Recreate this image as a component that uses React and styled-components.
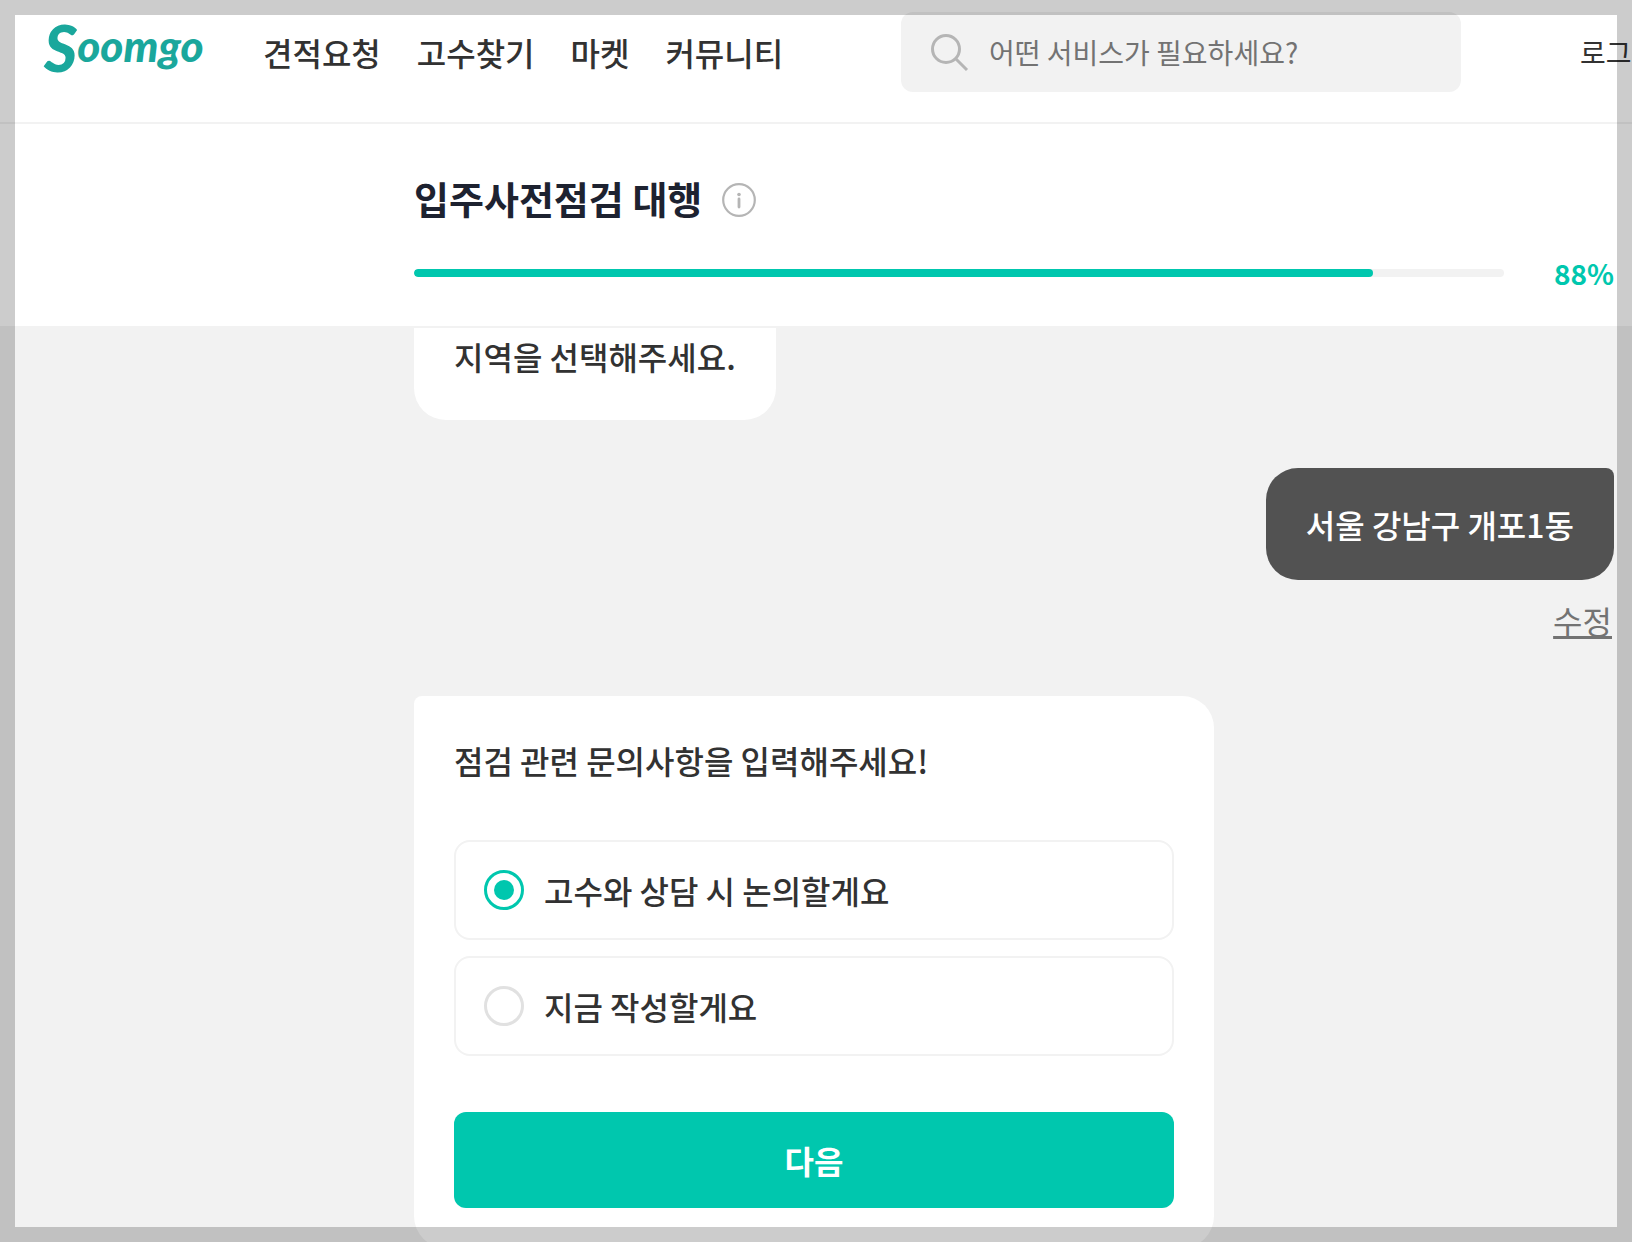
import React, { useState } from 'react'
import styled, { createGlobalStyle } from 'styled-components';

const GlobalStyle = createGlobalStyle`
    * {
        box-sizing: border-box;
    }

    body {
        margin: 0;
        background: #f2f2f2;
        color: #323232;
        font-family: "Noto Sans CJK KR", "Noto Sans", sans-serif;
        font-size: 32px;
        line-height: 48px;
    }

    button, input {
        font-family: inherit;
    }
`;

const Page = styled.div`
    height: 100vh;
    display: flex;
    flex-direction: column;
    overflow: hidden;
`;

const Frame = styled.div`
    position: fixed;
    inset: 0;
    z-index: 100;
    border: 15px solid rgba(0, 0, 0, 0.2);
    pointer-events: none;
`;

const Header = styled.header`
    display: flex;
    align-items: center;
    flex-shrink: 0;
    padding: 12px 0 30px 44px;
    background: #fff;
    border-bottom: 2px solid #f2f2f2;
`;

const Logo = styled.a`
    flex-shrink: 0;
    width: 160px;
    padding-bottom: 14px;
    color: #1aa79c;
    font-family: Lato, sans-serif;
    font-size: 44px;
    font-style: italic;
    font-weight: 900;
    text-decoration: none;
    white-space: nowrap;
`;

const LogoInitial = styled.span`
    font-size: 64px;
    line-height: 0;
    vertical-align: -10px;
`;

const Nav = styled.nav`
    display: flex;
    gap: 36px;
    margin-left: 59px;
`;

const NavLink = styled.a`
    color: inherit;
    font-weight: 500;
    text-decoration: none;
    white-space: nowrap;
`;

const Search = styled.label`
    display: flex;
    align-items: center;
    gap: 20px;
    flex: 0 1 560px;
    height: 80px;
    margin-left: auto;
    padding: 0 28px;
    background: #f2f2f2;
    border-radius: 12px;
`;

const SearchIcon = styled.svg`
    flex: none;
    width: 40px;
    height: 40px;
`;

const SearchInput = styled.input`
    flex: 1;
    min-width: 0;
    padding: 0;
    border: 0;
    outline: 0;
    background: transparent;
    font-size: 28px;

    &::placeholder {
        color: #737373;
        opacity: 1;
    }
`;

const Login = styled.a`
    flex: 0 0 52px;
    margin-left: 119px;
    color: inherit;
    font-size: 28px;
    text-decoration: none;
    white-space: nowrap;
    overflow: hidden;
`;

const ProgressSection = styled.section`
    flex-shrink: 0;
    padding: 48px 18px 28px;
    background: #fff;
    border-bottom: 2px solid #f2f2f2;
`;

const Container = styled.div`
    max-width: 1200px;
    margin-left: auto;
`;

const TitleRow = styled.div`
    display: flex;
    align-items: center;
    gap: 20px;
    height: 56px;
`;

const Title = styled.h1`
    margin: 0;
    padding-bottom: 4px;
    color: #1d2230;
    font-size: 38px;
    font-weight: 700;
`;

const InfoButton = styled.button`
    display: flex;
    padding: 0;
    border: 0;
    background: none;
    cursor: pointer;
`;

const ProgressRow = styled.div`
    display: flex;
    align-items: center;
    height: 50px;
    margin-top: 20px;
`;

const Track = styled.div`
    flex: 1;
    height: 8px;
    background: #f2f2f2;
    border-radius: 4px;
    overflow: hidden;
`;

const Fill = styled.div`
    height: 100%;
    background: #00c7ae;
    border-radius: 4px;
`;

const Percent = styled.span`
    width: 110px;
    color: #00c7ae;
    font-size: 28px;
    font-weight: 700;
    text-align: right;
`;

const Chat = styled.main`
    flex: 1;
    min-height: 0;
    padding: 0 18px;
    overflow-y: auto;
    scrollbar-width: none;
`;

const Messages = styled(Container)`
    display: flex;
    flex-direction: column;
    align-items: flex-start;
`;

const Question = styled.div`
    padding: 4px 40px 40px;
    background: #fff;
    border-radius: 0 0 32px 32px;
    font-weight: 500;
`;

const Answer = styled.div`
    align-self: flex-end;
    margin-top: 48px;
    padding: 32px 40px;
    background: #525252;
    border-radius: 32px 8px 32px 32px;
    color: #fff;
    font-weight: 500;
`;

const EditButton = styled.button`
    align-self: flex-end;
    margin: 16px 2px 52px 0;
    padding: 0;
    border: 0;
    background: none;
    color: #737373;
    font-size: 32px;
    line-height: 48px;
    text-decoration: underline;
    cursor: pointer;
`;

const Card = styled.form`
    width: 100%;
    max-width: 800px;
    padding: 40px;
    background: #fff;
    border-radius: 8px 32px 32px 32px;
`;

const Options = styled.fieldset`
    display: flex;
    flex-direction: column;
    gap: 16px;
    margin: 0;
    padding: 0;
    border: 0;
`;

const Legend = styled.legend`
    margin-bottom: 56px;
    padding: 0;
    font-weight: 500;
`;

const Option = styled.label`
    display: flex;
    align-items: center;
    gap: 20px;
    height: 100px;
    padding: 0 28px;
    border: 2px solid #f2f2f2;
    border-radius: 16px;
    font-weight: 500;
    cursor: pointer;
`;

const Radio = styled.input`
    appearance: none;
    display: grid;
    place-items: center;
    width: 40px;
    height: 40px;
    margin: 0;
    border: 3px solid #e1e1e1;
    border-radius: 50%;

    &:checked {
        border-color: #00c7ae;
    }

    &:checked::before {
        content: "";
        width: 20px;
        height: 20px;
        background: #00c7ae;
        border-radius: 50%;
    }
`;

const NextButton = styled.button`
    width: 100%;
    height: 96px;
    margin-top: 56px;
    border: 0;
    border-radius: 12px;
    background: #00c7ae;
    color: #fff;
    font-size: 32px;
    font-weight: 700;
    cursor: pointer;
`;

const menus = ['견적요청', '고수찾기', '마켓', '커뮤니티'];
const options = ['고수와 상담 시 논의할게요', '지금 작성할게요'];
const progress = 88;

const App = () => {
    const [selected, setSelected] = useState(options[0]);

    return (
        <Page>
            <GlobalStyle />
            <Header>
                <Logo href="#"><LogoInitial>S</LogoInitial>oomgo</Logo>
                <Nav>
                    {menus.map((menu) => (
                        <NavLink href="#" key={menu}>{menu}</NavLink>
                    ))}
                </Nav>
                <Search>
                    <SearchIcon viewBox="0 0 40 40" fill="none" stroke="#b5b5b5" strokeWidth="3" aria-hidden="true">
                        <circle cx="17" cy="17" r="13.5" />
                        <path d="M26.5 26.5 38 38" />
                    </SearchIcon>
                    <SearchInput type="search" aria-label="검색" placeholder="어떤 서비스가 필요하세요?" />
                </Search>
                <Login href="#">로그인</Login>
            </Header>

            <ProgressSection>
                <Container>
                    <TitleRow>
                        <Title>입주사전점검 대행</Title>
                        <InfoButton type="button" aria-label="안내">
                            <svg width="34" height="34" viewBox="0 0 34 34" fill="none" aria-hidden="true">
                                <circle cx="17" cy="17" r="15.8" stroke="#b5b5b5" strokeWidth="2.2" />
                                <circle cx="17" cy="11.5" r="1.8" fill="#b5b5b5" />
                                <path d="M17 16v8" stroke="#b5b5b5" strokeWidth="2.8" strokeLinecap="round" />
                            </svg>
                        </InfoButton>
                    </TitleRow>
                    <ProgressRow>
                        <Track>
                            <Fill style={{ width: `${progress}%` }} />
                        </Track>
                        <Percent>{progress}%</Percent>
                    </ProgressRow>
                </Container>
            </ProgressSection>

            <Chat>
                <Messages>
                    <Question>지역을 선택해주세요.</Question>
                    <Answer>서울 강남구 개포1동</Answer>
                    <EditButton type="button">수정</EditButton>
                    <Card onSubmit={(e) => e.preventDefault()}>
                        <Options>
                            <Legend>점검 관련 문의사항을 입력해주세요!</Legend>
                            {options.map((option) => (
                                <Option key={option}>
                                    <Radio
                                        type="radio"
                                        name="inquiry"
                                        checked={selected === option}
                                        onChange={() => setSelected(option)}
                                    />
                                    {option}
                                </Option>
                            ))}
                        </Options>
                        <NextButton type="submit">다음</NextButton>
                    </Card>
                </Messages>
            </Chat>
            <Frame />
        </Page>
    )
}

export default App
